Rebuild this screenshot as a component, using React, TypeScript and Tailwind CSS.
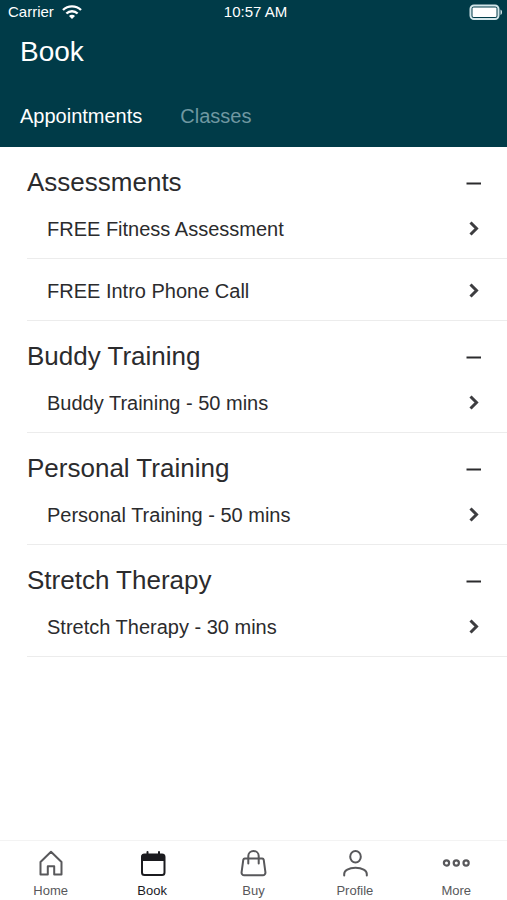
import { useState } from 'react';
import type { ReactNode } from 'react';

type Section = { title: string; items: string[] };

const sections: Section[] = [
  { title: 'Assessments', items: ['FREE Fitness Assessment', 'FREE Intro Phone Call'] },
  { title: 'Buddy Training', items: ['Buddy Training - 50 mins'] },
  { title: 'Personal Training', items: ['Personal Training - 50 mins'] },
  { title: 'Stretch Therapy', items: ['Stretch Therapy - 30 mins'] },
];

const HomeIcon = () => (
  <svg width="28" height="28" viewBox="0 0 28 28" fill="none" stroke="currentColor" strokeWidth="2" strokeLinejoin="round">
    <path d="M3.500 25.500V13L14 2.800l10.500 10.200v12.500h-7.300v-8.300h-6.400v8.300z" />
  </svg>
);

const BookIcon = () => (
  <svg width="28" height="28" viewBox="0 0 28 28" fill="none" stroke="currentColor" strokeWidth="2">
    <rect x="4" y="5.500" width="22.500" height="20.500" rx="2.500" />
    <path d="M3.500 12V7.500a2.500 2.500 0 0 1 2.500-2.500h18.500a2.500 2.500 0 0 1 2.500 2.500V12z" fill="currentColor" stroke="none" />
    <path d="M9.500 3v3M21 3v3" strokeLinecap="round" />
  </svg>
);

const BuyIcon = () => (
  <svg width="28" height="28" viewBox="0 0 28 28" fill="none" stroke="currentColor" strokeWidth="2" strokeLinecap="round">
    <path d="M5.800 9.500h17.400a1.500 1.500 0 0 1 1.500 1.200l1.700 12.500a2.600 2.600 0 0 1-2.600 3H5.200a2.600 2.600 0 0 1-2.600-3L4.300 10.700a1.500 1.500 0 0 1 1.500-1.200z" />
    <path d="M9.300 14.500V7a5.200 5 0 0 1 10.400 0v7.500" />
  </svg>
);

const ProfileIcon = () => (
  <svg width="28" height="28" viewBox="0 0 28 28" fill="none" stroke="currentColor" strokeWidth="2" strokeLinecap="round">
    <ellipse cx="14.500" cy="7.800" rx="5.300" ry="5.800" />
    <path d="M3.200 26.500v-1.500c0-3.600 4.500-6.200 11.300-6.200s11.300 2.600 11.300 6.200v1.500" />
  </svg>
);

const MoreIcon = () => (
  <svg width="28" height="28" viewBox="0 0 28 28" fill="none" stroke="currentColor" strokeWidth="2.200">
    <circle cx="4.500" cy="14" r="2.600" />
    <circle cx="14.300" cy="14" r="2.600" />
    <circle cx="24.100" cy="14" r="2.600" />
  </svg>
);

const navItems: { label: string; icon: ReactNode }[] = [
  { label: 'Home', icon: <HomeIcon /> },
  { label: 'Book', icon: <BookIcon /> },
  { label: 'Buy', icon: <BuyIcon /> },
  { label: 'Profile', icon: <ProfileIcon /> },
  { label: 'More', icon: <MoreIcon /> },
];

const StatusBar = () => (
  <div className="grid h-6 grid-cols-3 items-center pr-1 pl-2 text-[15px]">
    <div className="flex items-center gap-2">
      <span>Carrier</span>
      <svg width="20" height="16" viewBox="0 0 20 16" fill="none" stroke="currentColor" strokeWidth="2.400">
        <path d="M1 6a13 13 0 0 1 18 0" />
        <path d="M4.400 9.500a8 8 0 0 1 11.200 0" />
        <path d="M10 15l-3-3a4.200 4.200 0 0 1 6 0z" fill="currentColor" stroke="none" />
      </svg>
    </div>
    <span className="text-center">10:57 AM</span>
    <svg className="justify-self-end" width="34" height="16" viewBox="0 0 34 16" fill="none">
      <rect x="1.500" y="1.500" width="28" height="13.500" rx="3.500" stroke="#d3e6ea" strokeWidth="2" />
      <rect x="3.500" y="3.500" width="24" height="9.500" rx="1" fill="white" />
      <path d="M31.500 5.500c2 .7 2 4.800 0 5.500z" fill="#d3e6ea" />
    </svg>
  </div>
);

const App = () => {
  const [activeTab, setActiveTab] = useState('Appointments');
  const [activePage, setActivePage] = useState('Book');
  const [closed, setClosed] = useState<string[]>([]);

  const toggleSection = (title: string) => {
    setClosed(closed.includes(title) ? closed.filter(t => t !== title) : [...closed, title]);
  };

  return (
    <div className="flex min-h-screen flex-col bg-white font-['Liberation_Sans',Arial,sans-serif] text-[#2b2b2d]">
      <header className="bg-[#003b48] text-white">
        <StatusBar />
        <h1 className="px-5 pt-2 text-[28px] leading-10">Book</h1>
        <div className="flex gap-[38px] px-5 pt-7 pb-[15px]">
          {['Appointments', 'Classes'].map(tab => (
            <button
              key={tab}
              onClick={() => setActiveTab(tab)}
              className={`text-xl leading-8 ${activeTab === tab ? 'text-white' : 'text-[#6f97a1]'}`}
            >
              {tab}
            </button>
          ))}
        </div>
      </header>

      <main className="flex-1">
        {activeTab === 'Appointments' && sections.map(section => (
          <section key={section.title}>
            <h2>
              <button
                onClick={() => toggleSection(section.title)}
                aria-expanded={!closed.includes(section.title)}
                className="flex w-full items-center justify-between pt-5 pr-[23px] pl-[27px] text-left text-[26px] leading-[30px]"
              >
                {section.title}
                <svg width="20" height="20" viewBox="0 0 20 20" stroke="currentColor" strokeWidth="2">
                  <path d="M2.500 11.500h14.500" />
                  {closed.includes(section.title) && <path d="M9.750 4.250v14.500" />}
                </svg>
              </button>
            </h2>
            {!closed.includes(section.title) && (
              <ul className="pl-[27px]">
                {section.items.map(item => (
                  <li key={item} className="border-b border-[#ececec]">
                    <button className="flex h-[61px] w-full items-center justify-between pt-0.5 pr-[23px] pl-5 text-left text-xl">
                      {item}
                      <svg width="20" height="20" viewBox="0 0 20 20" fill="none" stroke="#3d3d40" strokeWidth="3">
                        <path d="M6.500 3.500l6 6-6 6" />
                      </svg>
                    </button>
                  </li>
                ))}
              </ul>
            )}
          </section>
        ))}
      </main>

      <nav className="grid h-[60px] grid-cols-5 border-t border-[#f3f3f3]">
        {navItems.map(({ label, icon }) => (
          <button
            key={label}
            onClick={() => setActivePage(label)}
            className={`flex flex-col items-center pt-2 text-[13px] leading-4 ${activePage === label ? 'text-[#1b1b1f]' : 'text-[#58585b]'}`}
          >
            {icon}
            <span className="pt-1.5">{label}</span>
          </button>
        ))}
      </nav>
    </div>
  );
};

export default App;
